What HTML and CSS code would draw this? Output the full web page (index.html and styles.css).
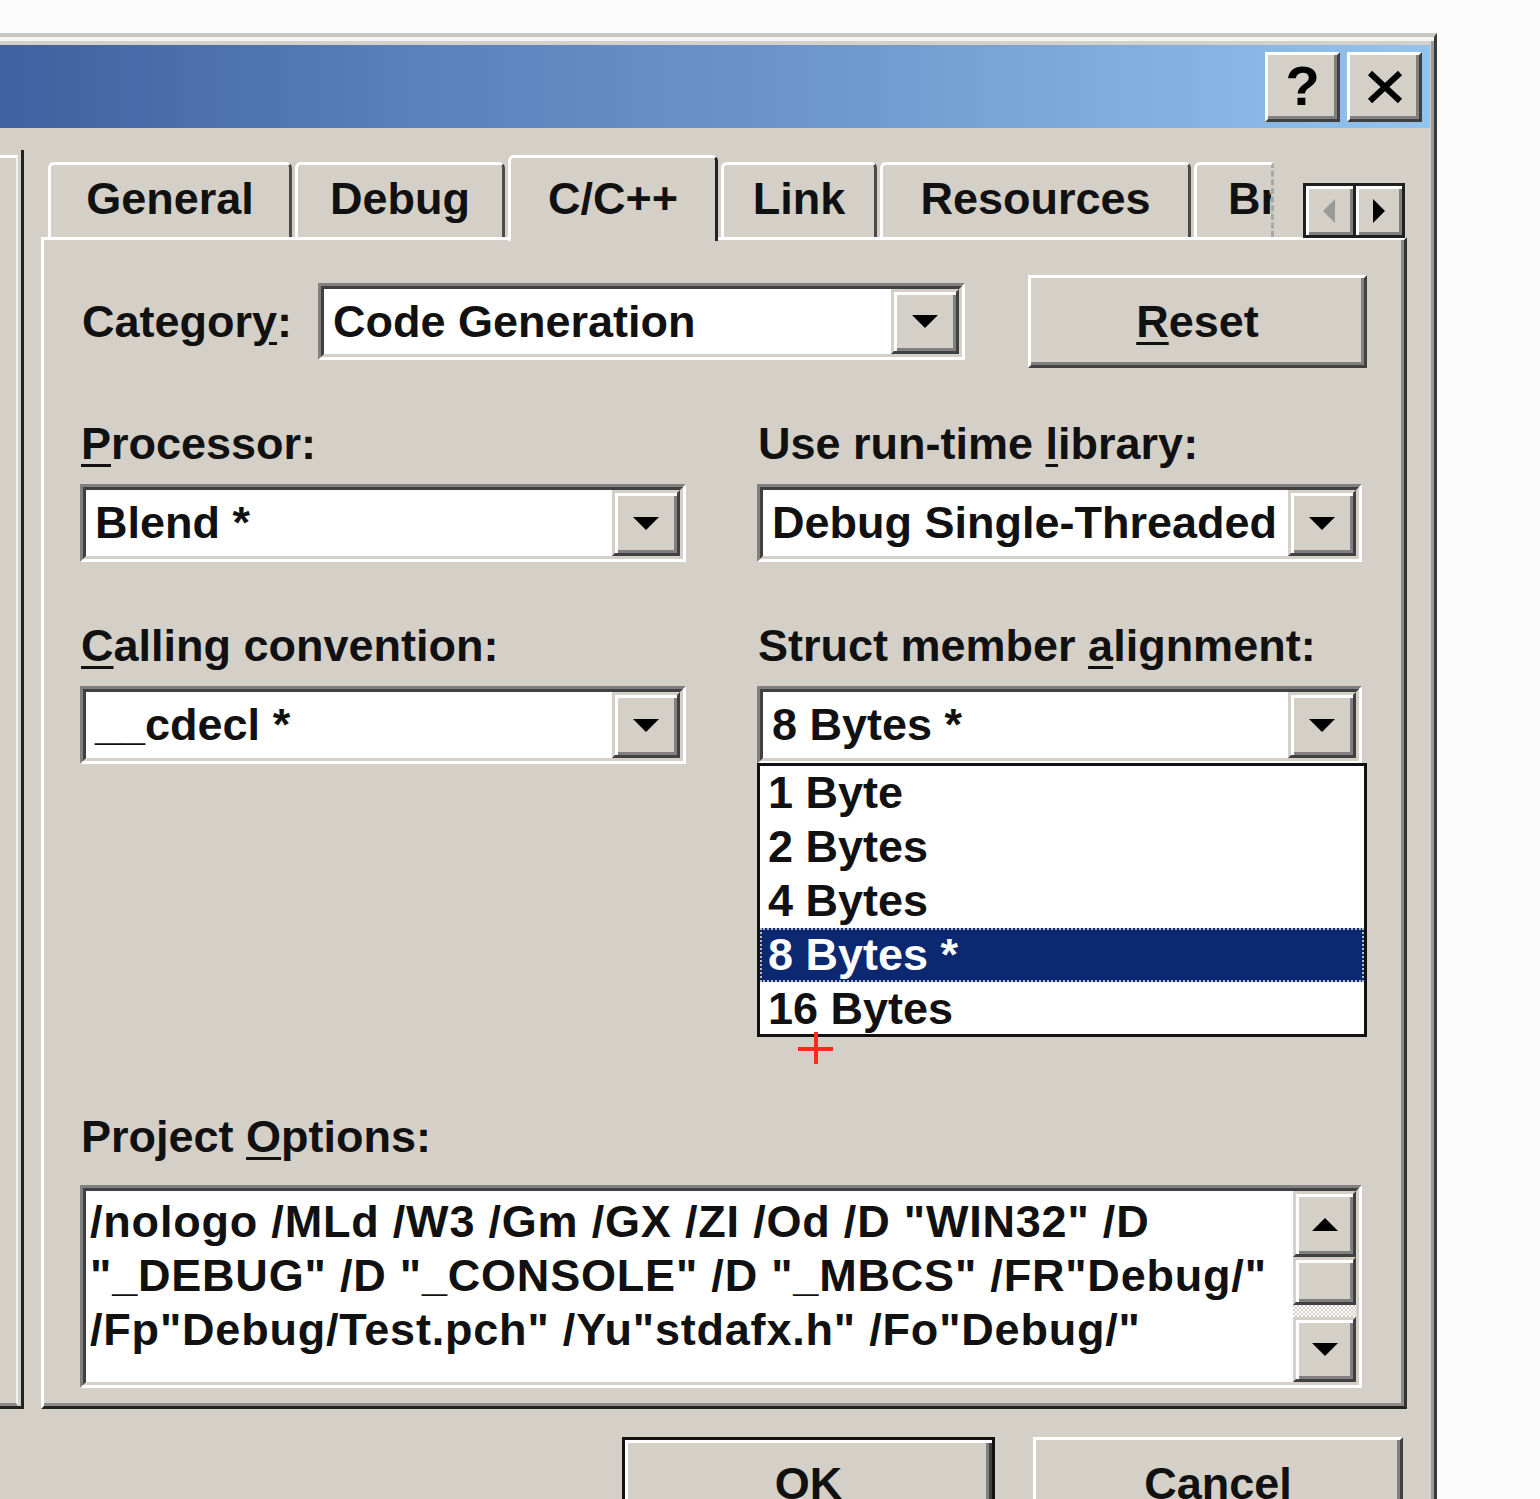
FILE: index.html
```html
<!DOCTYPE html>
<html>
<head>
<meta charset="utf-8">
<title>Project Settings</title>
<link rel="stylesheet" href="styles.css">
</head>
<body>
<div class="dialog">
  <div class="titlebar">
    <div class="tbtn tbtn-help">?</div>
    <div class="tbtn tbtn-close">
      <svg width="38" height="34" viewBox="0 0 38 34"><path d="M4 3 L34 31 M34 3 L4 31" stroke="#000" stroke-width="6" fill="none"/></svg>
    </div>
  </div>
  <div class="client">
    <div class="main">
      <div class="leftpane"><div class="leftpane-inner"></div></div>
      <div class="tabarea">
        <div class="tabstrip">
          <div class="tab tab-general">General</div>
          <div class="tab tab-debug">Debug</div>
          <div class="tab tab-cpp tab-active">C/C++</div>
          <div class="tab tab-link">Link</div>
          <div class="tab tab-res">Resources</div>
          <div class="tab tab-browse">Browse Info</div>
          <div class="tabscroll">
            <div class="ts-btn"><span class="arrow-left"></span></div>
            <div class="ts-btn ts-btn-right"><span class="arrow-right"></span></div>
          </div>
        </div>
        <div class="panel">
          <div class="row-category">
            <div class="label-cat">Categor<u>y</u>:</div>
            <div class="combo combo-cat">
              <div class="combo-in">
                <div class="combo-text">Code Generation</div>
                <div class="ddbtn"><span class="arrow-down"></span></div>
              </div>
            </div>
            <div class="btn btn-reset"><span><u>R</u>eset</span></div>
          </div>
          <div class="grid">
            <div class="field">
              <div class="label"><u>P</u>rocessor:</div>
              <div class="combo">
                <div class="combo-in">
                  <div class="combo-text">Blend *</div>
                  <div class="ddbtn"><span class="arrow-down"></span></div>
                </div>
              </div>
            </div>
            <div class="field">
              <div class="label">Use run-time <u>l</u>ibrary:</div>
              <div class="combo">
                <div class="combo-in">
                  <div class="combo-text">Debug Single-Threaded</div>
                  <div class="ddbtn"><span class="arrow-down"></span></div>
                </div>
              </div>
            </div>
            <div class="field">
              <div class="label"><u>C</u>alling convention:</div>
              <div class="combo">
                <div class="combo-in">
                  <div class="combo-text">__cdecl *</div>
                  <div class="ddbtn"><span class="arrow-down"></span></div>
                </div>
              </div>
            </div>
            <div class="field">
              <div class="label">Struct member <u>a</u>lignment:</div>
              <div class="combo combo-open">
                <div class="combo-in">
                  <div class="combo-text">8 Bytes *</div>
                  <div class="ddbtn"><span class="arrow-down"></span></div>
                </div>
                <div class="ddlist">
                  <div class="dditem">1 Byte</div>
                  <div class="dditem">2 Bytes</div>
                  <div class="dditem">4 Bytes</div>
                  <div class="dditem dditem-sel">8 Bytes *</div>
                  <div class="dditem">16 Bytes</div>
                  <div class="cursor"></div>
                </div>
              </div>
            </div>
          </div>
          <div class="label label-options">Project <u>O</u>ptions:</div>
          <div class="textbox">
            <div class="textbox-in">
              <div class="options-text">/nologo /MLd /W3 /Gm /GX /ZI /Od /D "WIN32" /D<br>"_DEBUG" /D "_CONSOLE" /D "_MBCS" /FR"Debug/"<br>/Fp"Debug/Test.pch" /Yu"stdafx.h" /Fo"Debug/"</div>
              <div class="vscroll">
                <div class="sb-btn sb-up"><span class="arrow-up"></span></div>
                <div class="sb-thumb"></div>
                <div class="sb-track"></div>
                <div class="sb-btn sb-down"><span class="arrow-down"></span></div>
              </div>
            </div>
          </div>
        </div>
      </div>
    </div>
    <div class="buttons">
      <div class="btn btn-ok">OK</div>
      <div class="btn btn-cancel">Cancel</div>
    </div>
  </div>
</div>
</body>
</html>
```

FILE: styles.css
```css
html, body {
  margin: 0;
  padding: 0;
  background: #fcfcfc;
  height: 1499px;
  overflow: hidden;
}
body {
  font-family: "Liberation Sans", Arial, sans-serif;
  font-weight: bold;
  font-size: 45px;
  color: #111;
}
u {
  text-decoration-thickness: 3px;
  text-underline-offset: 5px;
}

.dialog {
  margin-top: 33px;
  width: 1437px;
  height: 1500px;
  box-sizing: border-box;
  background: #d4d0c8;
  border-top: 4px solid #cac7c0;
  border-right: 3px solid #3a3a3a;
  padding-top: 8px;
  box-shadow: inset 0 4px 0 #f6f6f6, inset -3px 0 0 #9a9a9a;
}

/* title bar */
.titlebar {
  height: 83px;
  margin-right: 4px;
  background: linear-gradient(90deg, #3f619f 0%, #5a82bb 30%, #6f9ace 60%, #93c4ee 100%);
  display: flex;
  justify-content: flex-end;
  align-items: center;
  gap: 7px;
  padding-right: 8px;
}
.tbtn {
  width: 75px;
  height: 70px;
  box-sizing: border-box;
  background: #d4d0c8;
  border: 3px solid;
  border-color: #fff #404040 #404040 #fff;
  box-shadow: inset -3px -3px 0 #808080;
  display: flex;
  align-items: center;
  justify-content: center;
}
.tbtn-help {
  font-size: 56px;
  line-height: 1;
  color: #000;
  padding-bottom: 2px;
}

/* client */
.main {
  display: flex;
  padding-top: 22px;
}
.leftpane {
  width: 24px;
  height: 1259px;
  box-sizing: border-box;
  border-right: 3px solid #222;
  border-bottom: 3px solid #222;
  padding-top: 5px;
}
.leftpane-inner {
  width: 18px;
  height: 100%;
  box-sizing: border-box;
  border-top: 3px solid #fff;
  border-right: 2px solid #f2f2f2;
  border-bottom: 3px solid #8a8a8a;
}
.tabarea {
  margin-left: 17px;
  width: 1366px;
  display: flex;
  flex-direction: column;
}

/* tabs */
.tabstrip {
  position: relative;
  height: 87px;
  display: flex;
  align-items: flex-end;
  gap: 3px;
  padding-left: 7px;
}
.tab {
  height: 75px;
  box-sizing: border-box;
  background: #d4d0c8;
  border-left: 3px solid #fff;
  border-top: 3px solid #fff;
  border-right: 3px solid #4a4a4a;
  border-radius: 6px 6px 0 0;
  display: flex;
  align-items: center;
  justify-content: center;
  white-space: nowrap;
  padding-bottom: 4px;
}
.tab-general { width: 244px; }
.tab-debug { width: 210px; }
.tab-cpp { width: 210px; }
.tab-link { width: 156px; }
.tab-res { width: 311px; }
.tab-browse {
  width: 80px;
  justify-content: flex-start;
  padding-left: 31px;
  overflow: hidden;
  border-right: 3px dashed #a8a8a8;
  border-top-right-radius: 0;
}
.tab-active {
  position: relative;
  z-index: 2;
  height: 86px;
  margin-bottom: -4px;
  border-right-color: #222;
  padding-bottom: 2px;
}
.tabscroll {
  position: absolute;
  right: 2px;
  top: 33px;
  width: 102px;
  height: 55px;
  box-sizing: border-box;
  border: 3px solid #202020;
  display: flex;
  background: #d4d0c8;
  z-index: 3;
}
.ts-btn {
  flex: 1;
  box-shadow: inset 3px 3px 0 #fff, inset -3px -3px 0 #808080;
  display: flex;
  align-items: center;
  justify-content: center;
}
.ts-btn-right {
  border-left: 3px solid #202020;
}
.arrow-left {
  width: 0; height: 0;
  border-top: 12px solid transparent;
  border-bottom: 12px solid transparent;
  border-right: 12px solid #9a9a9a;
}
.arrow-right {
  width: 0; height: 0;
  border-top: 12px solid transparent;
  border-bottom: 12px solid transparent;
  border-left: 12px solid #000;
}

/* panel */
.panel {
  position: relative;
  height: 1172px;
  box-sizing: border-box;
  border-left: 3px solid #fff;
  border-top: 3px solid #fff;
  border-right: 3px solid #333;
  border-bottom: 3px solid #222;
  box-shadow: inset -3px -3px 0 #8c8c8c;
  padding: 35px 37px 0 36px;
}
.row-category {
  display: flex;
  align-items: center;
  height: 93px;
}
.label-cat {
  width: 238px;
  padding-left: 2px;
  box-sizing: border-box;
  white-space: nowrap;
}
.combo {
  position: relative;
  height: 78px;
  box-sizing: border-box;
  border: 3px solid;
  border-color: #808080 #fff #fff #808080;
}
.combo-cat {
  width: 647px;
  height: 77px;
}
.combo-in {
  height: 100%;
  box-sizing: border-box;
  border: 3px solid;
  border-color: #404040 #d4d0c8 #d4d0c8 #404040;
  background: #fff;
  display: flex;
  align-items: stretch;
}
.combo-text {
  flex: 1;
  display: flex;
  align-items: center;
  padding-left: 9px;
  white-space: nowrap;
  overflow: hidden;
}
.ddbtn {
  width: 68px;
  box-sizing: border-box;
  background: #d4d0c8;
  border: 3px solid;
  border-color: #d4d0c8 #404040 #404040 #d4d0c8;
  box-shadow: inset 3px 3px 0 #fff, inset -3px -3px 0 #808080;
  display: flex;
  align-items: center;
  justify-content: center;
}
.arrow-down {
  width: 0; height: 0;
  border-left: 13px solid transparent;
  border-right: 13px solid transparent;
  border-top: 13px solid #000;
}
.arrow-up {
  width: 0; height: 0;
  border-left: 13px solid transparent;
  border-right: 13px solid transparent;
  border-bottom: 13px solid #000;
}

.btn {
  width: 370px;
  height: 93px;
  box-sizing: border-box;
  background: #d4d0c8;
  border: 3px solid;
  border-color: #fff #404040 #404040 #fff;
  box-shadow: inset -3px -3px 0 #808080;
  display: flex;
  align-items: center;
  justify-content: center;
}
.btn-reset {
  margin-left: auto;
  width: 339px;
}

.grid {
  display: grid;
  grid-template-columns: 606px 605px;
  column-gap: 71px;
  row-gap: 57px;
  margin-top: 49px;
}
.label {
  line-height: 54px;
  height: 54px;
  margin-bottom: 13px;
  padding-left: 1px;
  white-space: nowrap;
}

.ddlist {
  position: absolute;
  left: -3px;
  top: calc(100% + 2px);
  width: 610px;
  height: 274px;
  box-sizing: border-box;
  border: 3px solid #111;
  background: #fff;
  z-index: 5;
}
.dditem {
  height: 54px;
  line-height: 54px;
  padding-left: 8px;
  white-space: nowrap;
}
.dditem-sel {
  background: #0b2870;
  color: #fff;
  outline: 2px dotted #b8bcc8;
  outline-offset: -2px;
}
.cursor {
  position: absolute;
  left: 38px;
  top: 266px;
  width: 35px;
  height: 32px;
}
.cursor::before {
  content: "";
  position: absolute;
  left: 0;
  top: 15px;
  width: 35px;
  height: 4px;
  background: #ff2a1a;
}
.cursor::after {
  content: "";
  position: absolute;
  left: 16px;
  top: 0;
  width: 4px;
  height: 32px;
  background: #ff2a1a;
}

.label-options {
  margin-top: 346px;
  margin-bottom: 21px;
}
.textbox {
  width: 1282px;
  height: 203px;
  box-sizing: border-box;
  border: 3px solid;
  border-color: #808080 #fff #fff #808080;
}
.textbox-in {
  height: 100%;
  box-sizing: border-box;
  border: 3px solid;
  border-color: #404040 #d4d0c8 #d4d0c8 #404040;
  background: #fff;
  display: flex;
}
.options-text {
  flex: 1;
  padding: 4px 0 0 4px;
  line-height: 54px;
  letter-spacing: 0.8px;
  white-space: nowrap;
  overflow: hidden;
}
.vscroll {
  width: 63px;
  display: flex;
  flex-direction: column;
}
.sb-btn {
  box-sizing: border-box;
  background: #d4d0c8;
  border: 3px solid;
  border-color: #d4d0c8 #404040 #404040 #d4d0c8;
  box-shadow: inset 3px 3px 0 #fff, inset -3px -3px 0 #808080;
  display: flex;
  align-items: center;
  justify-content: center;
}
.sb-up { height: 66px; }
.sb-down { height: 65px; }
.sb-thumb {
  height: 48px;
  box-sizing: border-box;
  background: #d4d0c8;
  border: 3px solid;
  border-color: #d4d0c8 #404040 #404040 #d4d0c8;
  box-shadow: inset 3px 3px 0 #fff, inset -3px -3px 0 #808080;
}
.sb-track {
  flex: 1;
  background: repeating-conic-gradient(#ffffff 0 25%, #d4d0c8 0 50%) 0 0 / 4px 4px;
}

/* bottom buttons */
.buttons {
  display: flex;
  justify-content: flex-end;
  gap: 38px;
  margin-top: 28px;
  padding-right: 31px;
}
.btn-ok {
  width: 373px;
  border: 3px solid #111;
  box-shadow: inset 3px 3px 0 #fff, inset -3px -3px 0 #404040, inset -6px -6px 0 #808080;
}
```
